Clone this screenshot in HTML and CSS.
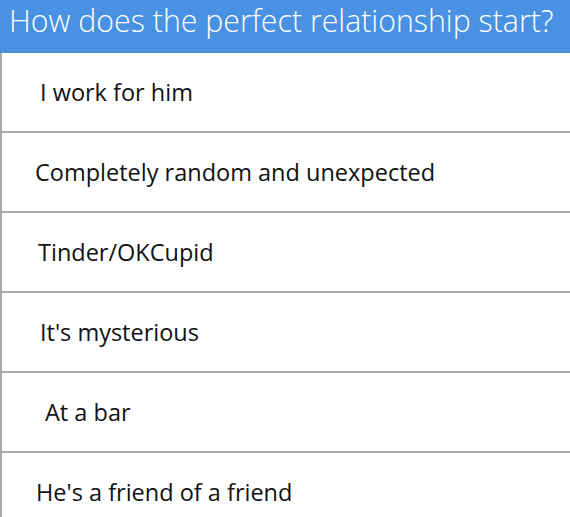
FILE: index.html
```html
<!DOCTYPE html>
<html>
<head>
<meta charset="utf-8">
<link rel="stylesheet" href="styles.css">
</head>
<body>
<div class="quiz">
  <div class="question">How does the perfect relationship start?</div>
  <ul class="answers">
    <li class="answer indent-40">I work for him</li>
    <li class="answer indent-35">Completely random and unexpected</li>
    <li class="answer indent-38">Tinder/OKCupid</li>
    <li class="answer indent-40">It's mysterious</li>
    <li class="answer indent-45">At a bar</li>
    <li class="answer indent-36">He's a friend of a friend</li>
  </ul>
</div>
</body>
</html>
```
FILE: styles.css
```css
html, body {
  margin: 0;
  padding: 0;
  background: #ffffff;
}

.quiz {
  width: 570px;
  height: 517px;
  overflow: hidden;
  font-family: "Open Sans", "Noto Sans", sans-serif;
}

.question {
  height: 53px;
  box-sizing: border-box;
  padding: 0 0 0 9px;
  background: linear-gradient(180deg, #4a92e3 0%, #4890e1 60%, #4b91e0 100%);
  color: #ffffff;
  font-weight: 300;
  font-size: 30.3px;
  line-height: 42px;
  white-space: nowrap;
}

.answers {
  list-style: none;
  margin: 0;
  padding: 0;
  border-left: 2px solid #aaaaaa;
}

.answer {
  height: 78px;
  border-bottom: 2px solid #aaaaaa;
  display: flex;
  align-items: center;
  color: #111111;
  font-size: 23.5px;
  white-space: nowrap;
}

.indent-35 { padding-left: 33px; }
.indent-36 { padding-left: 34px; }
.indent-38 { padding-left: 36px; }
.indent-40 { padding-left: 38px; }
.indent-45 { padding-left: 43px; }
```
